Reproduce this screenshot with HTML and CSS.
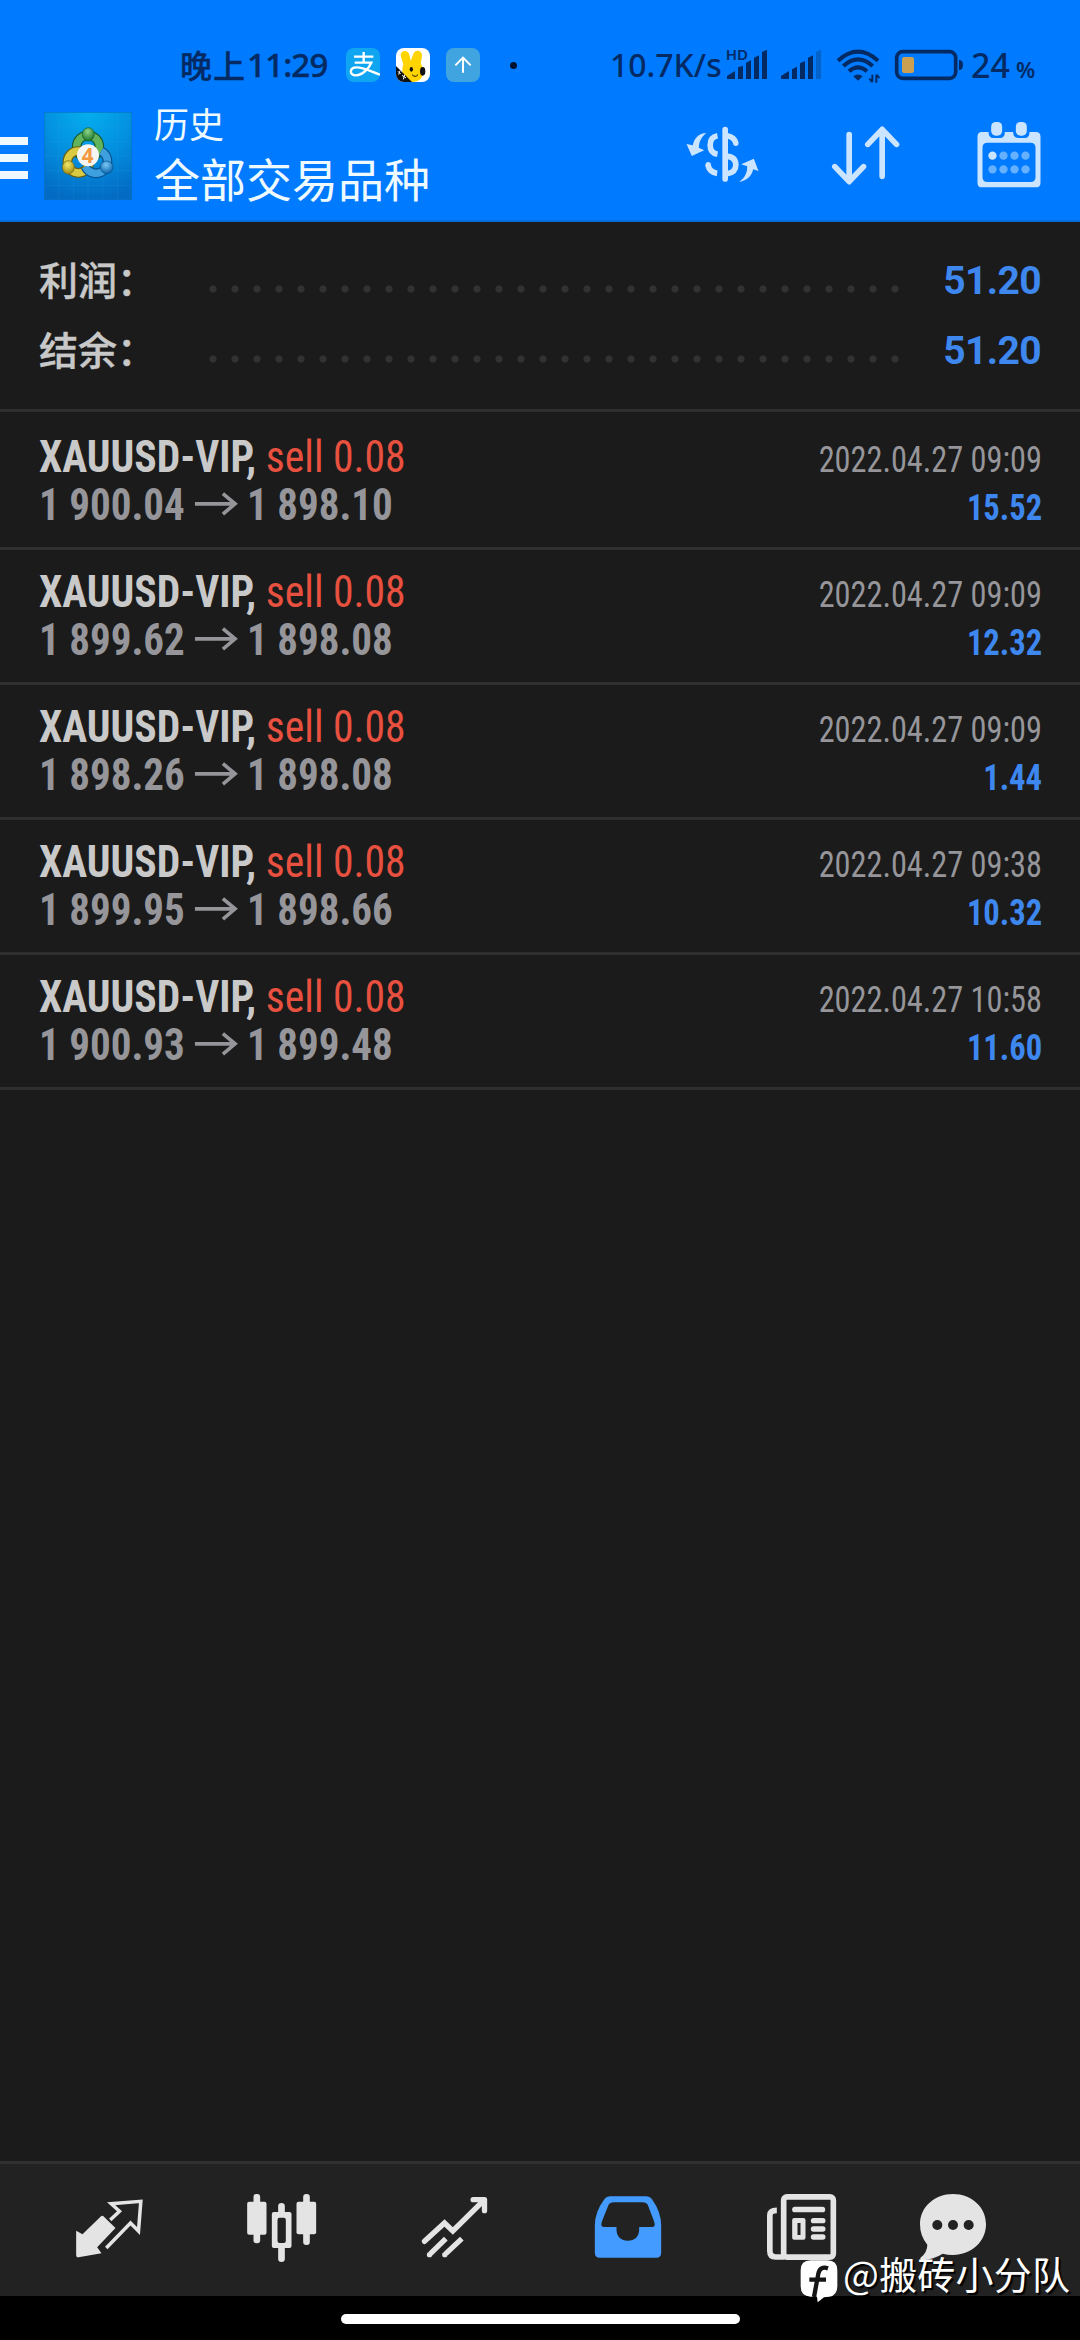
FILE: index.html
```html
<!DOCTYPE html>
<html lang="zh-CN">
<head>
<meta charset="utf-8">
<title>历史</title>
<link rel="stylesheet" href="styles.css">
</head>
<body>
<div class="screen">
  <header class="top">
    <div class="status">
      <span class="clock"><span class="clock-cn">晚上</span><span class="clock-num">11:29</span></span>
      <svg class="badge" viewBox="558 54 102 102"><rect x="558" y="54" width="102" height="102" rx="24" fill="#10a5f0"/><path d="M582 80H640M611 66V98M584 98H634C626 116 606 136 588 136C566 136 568 112 590 112C614 112 634 126 660 134" fill="none" stroke="#fff" stroke-width="7"/></svg>
      <svg class="badge" viewBox="708 54 102 102"><defs><clipPath id="rb"><rect x="708" y="54" width="102" height="102" rx="24"/></clipPath></defs><g clip-path="url(#rb)"><rect x="708" y="54" width="102" height="102" fill="#fff"/><path d="M722 76C722 60 744 58 748 74L752 92L760 72C766 56 788 62 786 78L782 102C794 112 796 156 758 156C730 156 722 120 730 104Z" fill="#ffd400"/><ellipse cx="788" cy="124" rx="8" ry="13" fill="#111"/><ellipse cx="754" cy="118" rx="5" ry="7" fill="#111"/><path d="M756 134Q766 144 774 134" fill="none" stroke="#111" stroke-width="3"/><path d="M708 108L756 156H708Z" fill="#111"/><path d="M714 124L722 132M720 122L716 134M726 136L738 144M734 134L730 148" stroke="#fff" stroke-width="3"/></g></svg>
      <svg class="badge" viewBox="858 54 102 102"><rect x="858" y="54" width="102" height="102" rx="24" fill="#40a4e0"/><path d="M909 128V84M886 106L909 83L932 106" fill="none" stroke="#fff" stroke-width="6"/></svg>
      <i class="dot"></i>
      <span class="speed">10.7K/s</span>
      <svg class="signals" viewBox="405 45 720 120">
        <text x="407" y="91" class="hd" textLength="67" lengthAdjust="spacingAndGlyphs">HD</text>
        <g fill="#032a63"><path d="M411 147V138L435 123V147ZM444 147V112L459 107V147ZM468 147V98L483 91V147ZM492 147V83L507 76V147ZM516 147V66L531 59V147Z"/><path d="M573 147V138L597 123V147ZM606 147V118L621 110V147ZM630 147V100L645 93V147ZM654 147V83L669 76V147Z"/></g>
        <path d="M678 147V66L693 59V147Z" fill="#0562c9"/>
        <g fill="none" stroke="#032a63" stroke-width="12"><path d="M744 92Q804 38 864 92M760 108Q804 68 848 108M777 124Q804 100 831 124"/></g>
        <path d="M790 139Q804 128 818 139L804 152Z" fill="#032a63"/>
        <path d="M847 157V134M838 146L847 156M859 158V134M868 144L859 134" stroke="#032a63" stroke-width="6" fill="none"/>
        <rect x="920" y="65" width="177" height="80" rx="18" fill="none" stroke="#032a63" stroke-width="11"/>
        <rect x="936" y="81" width="36" height="48" rx="6" fill="#cba052"/>
        <path d="M1107 90Q1119 90 1119 105Q1119 120 1107 120Z" fill="#032a63"/>
      </svg>
      <span class="battery">24</span><span class="percent">%</span>
    </div>
    <div class="appbar">
      <div class="menu"><i></i><i></i><i></i></div>
      <svg class="logo" viewBox="0 0 264 264">
        <defs>
          <radialGradient id="bg" cx=".5" cy="0" r="1"><stop offset="0" stop-color="#04aef0"/><stop offset=".5" stop-color="#0390df"/><stop offset="1" stop-color="#036bc4"/></radialGradient>
          <radialGradient id="gr" cx=".45" cy=".3" r=".7"><stop offset="0" stop-color="#8fd68a"/><stop offset="1" stop-color="#18742a"/></radialGradient>
          <radialGradient id="ye" cx=".45" cy=".3" r=".7"><stop offset="0" stop-color="#f4ea6a"/><stop offset="1" stop-color="#a08a10"/></radialGradient>
          <radialGradient id="bl" cx=".45" cy=".3" r=".7"><stop offset="0" stop-color="#7ac8f6"/><stop offset="1" stop-color="#0a63ac"/></radialGradient>
        </defs>
        <rect width="264" height="264" fill="url(#bg)"/>
        <path d="M44 0V264M88 0V264M132 0V264M176 0V264M220 0V264M0 44H264M0 88H264M0 132H264M0 176H264M0 220H264" stroke="#2fa9ec" stroke-opacity=".25" stroke-width="2"/>
        <g fill="none">
          <circle cx="132" cy="104" r="34" stroke="#15592b" stroke-width="29"/><circle cx="132" cy="104" r="34" stroke="#62b45c" stroke-width="22"/>
          <circle cx="103" cy="150" r="33" stroke="#675f14" stroke-width="29"/><circle cx="103" cy="150" r="33" stroke="#d9ca42" stroke-width="22"/>
          <path d="M124 164A35 35 0 1 0 172 118" stroke="#07508d" stroke-width="29"/><path d="M124 164A35 35 0 1 0 172 118" stroke="#3fa0e0" stroke-width="22"/>
        </g>
        <ellipse cx="133" cy="67" rx="18" ry="20" fill="url(#gr)" stroke="#14602a" stroke-width="2"/>
        <ellipse cx="73" cy="166" rx="18" ry="20" fill="url(#ye)" stroke="#766812" stroke-width="2"/>
        <ellipse cx="188" cy="166" rx="19" ry="19" fill="url(#bl)" stroke="#07508d" stroke-width="2"/>
        <circle cx="132" cy="130" r="33" fill="#f5f5f3"/>
        <text x="131" y="153" text-anchor="middle" class="four">4</text>
        <rect x="1" y="1" width="262" height="262" fill="none" stroke="#0673c4" stroke-width="2"/>
      </svg>
      <div class="titles"><div class="sub">历史</div><div class="title">全部交易品种</div></div>
      <div class="actions">
        <svg viewBox="64.500 60 240 240">
          <g fill="none" stroke="#cbe4ff" stroke-width="17"><path d="M194 104V252" stroke-linecap="round"/><path d="M171 122Q149 126 149 150Q149 174 171 178M142 209Q147 232 170 235" /><path d="M200 122Q222 126 226 144M200 184Q226 186 226 210Q226 232 200 236" /></g>
          <circle cx="143" cy="209" r="8" fill="#cbe4ff"/><circle cx="226" cy="145" r="8" fill="#cbe4ff"/>
          <path d="M137 114C116 114 101 129 97 151L78 147L94 183L131 166L115 158C116 140 122 127 137 114ZM236 261C256 247 261 228 260 214L242 208L280 191L294 228L278 223C274 243 260 257 236 261Z" fill="#cbe4ff"/>
        </svg>
        <svg viewBox="496.500 60 240 240"><g fill="none" stroke="#cbe4ff" stroke-width="17" stroke-linecap="round" stroke-linejoin="round"><path d="M566 119V259M523 215L566 260L609 215"/><path d="M665 244V105M622 148L665 103L708 148"/></g></svg>
        <svg viewBox="928.500 60 240 240">
          <path fill-rule="evenodd" d="M964 111H984Q984 129 1000 129H1018Q1033 129 1033 111H1058Q1058 129 1074 129H1092Q1107 129 1107 111H1126Q1140 111 1140 125V263Q1140 277 1126 277H964Q951 277 951 263V125Q951 111 964 111ZM981 143Q966 143 966 158V246Q966 261 981 261H1110Q1125 261 1125 246V158Q1125 143 1110 143Z" fill="#cbe4ff"/>
          <rect x="992" y="81" width="33" height="41" rx="14" fill="#cbe4ff"/><rect x="1066" y="81" width="33" height="41" rx="14" fill="#cbe4ff"/>
          <circle cx="996" cy="182" r="12.500" fill="#cbe4ff"/>
          <g fill="#65b0ff"><circle cx="1029" cy="182" r="12.500"/><circle cx="1062" cy="182" r="12.500"/><circle cx="1095" cy="182" r="12.500"/><circle cx="996" cy="223" r="12.500"/><circle cx="1029" cy="223" r="12.500"/><circle cx="1062" cy="223" r="12.500"/><circle cx="1095" cy="223" r="12.500"/></g>
        </svg>
      </div>
    </div>
  </header>

  <section class="summary">
    <div class="sum-row"><span class="label">利润：</span><i class="leader"></i><span class="total">51.20</span></div>
    <div class="sum-row"><span class="label">结余：</span><i class="leader"></i><span class="total">51.20</span></div>
  </section>

  <main class="deals">
    <div class="deal">
      <div class="line"><span class="name"><b>XAUUSD-VIP,</b> <span class="sell">sell 0.08</span></span><span class="date">2022.04.27 09:09</span></div>
      <div class="line"><span class="prices"><span class="num">1 900.04</span><svg class="arrow" viewBox="585 750 132 76"><path d="M587 789H709M672 758L709 789L672 820" /></svg><span class="num">1 898.10</span></span><span class="profit">15.52</span></div>
    </div>
    <div class="deal">
      <div class="line"><span class="name"><b>XAUUSD-VIP,</b> <span class="sell">sell 0.08</span></span><span class="date">2022.04.27 09:09</span></div>
      <div class="line"><span class="prices"><span class="num">1 899.62</span><svg class="arrow" viewBox="585 750 132 76"><path d="M587 789H709M672 758L709 789L672 820" /></svg><span class="num">1 898.08</span></span><span class="profit">12.32</span></div>
    </div>
    <div class="deal">
      <div class="line"><span class="name"><b>XAUUSD-VIP,</b> <span class="sell">sell 0.08</span></span><span class="date">2022.04.27 09:09</span></div>
      <div class="line"><span class="prices"><span class="num">1 898.26</span><svg class="arrow" viewBox="585 750 132 76"><path d="M587 789H709M672 758L709 789L672 820" /></svg><span class="num">1 898.08</span></span><span class="profit">1.44</span></div>
    </div>
    <div class="deal">
      <div class="line"><span class="name"><b>XAUUSD-VIP,</b> <span class="sell">sell 0.08</span></span><span class="date">2022.04.27 09:38</span></div>
      <div class="line"><span class="prices"><span class="num">1 899.95</span><svg class="arrow" viewBox="585 750 132 76"><path d="M587 789H709M672 758L709 789L672 820" /></svg><span class="num">1 898.66</span></span><span class="profit">10.32</span></div>
    </div>
    <div class="deal">
      <div class="line"><span class="name"><b>XAUUSD-VIP,</b> <span class="sell">sell 0.08</span></span><span class="date">2022.04.27 10:58</span></div>
      <div class="line"><span class="prices"><span class="num">1 900.93</span><svg class="arrow" viewBox="585 750 132 76"><path d="M587 789H709M672 758L709 789L672 820" /></svg><span class="num">1 899.48</span></span><span class="profit">11.60</span></div>
    </div>
  </main>

  <nav class="tabs">
    <div class="tab"><svg viewBox="217.500 162 216 216"><path d="M308 228L345 264L290 322L303 340L234 352Q227 353 227 346V272L246 283L300 230Q304 226 308 228Z" fill="#e4e4e4"/><path d="M333 236L357 214L332 191L421 184L414 273L390 249L321 320" fill="none" stroke="#e4e4e4" stroke-width="10.500" stroke-linecap="square"/></svg></div>
    <div class="tab"><svg viewBox="736.500 162 216 216"><g fill="#e4e4e4"><rect x="740" y="185" width="58" height="99" rx="6"/><rect x="759" y="162" width="20" height="148" rx="9"/><rect x="888" y="185" width="59" height="98" rx="6"/><rect x="908" y="162" width="20" height="153" rx="9"/><path fill-rule="evenodd" d="M820 216H867Q873 216 873 222V318Q873 324 867 324H820Q814 324 814 318V222Q814 216 820 216ZM837 233Q831 233 831 240V302Q831 309 837 309H850Q856 309 856 302V240Q856 233 850 233Z"/><path d="M833 218V198Q833 189 843 189Q853 189 853 198V218ZM833 322V357Q833 366 843 366Q853 366 853 357V322Z"/></g></svg></div>
    <div class="tab"><svg viewBox="175.500 162 216 216"><g fill="none" stroke="#e4e4e4" stroke-width="16"><path d="M192 304L252 249L277 273L368 183" stroke-linecap="round"/><path d="M338 179H372V212" stroke-linecap="round" stroke-linejoin="round"/><path d="M256 296L210 341M304 296L256 341"/></g><path d="M350 175H378V206Z" fill="#e4e4e4"/><circle cx="207" cy="344" r="8" fill="#e4e4e4"/><circle cx="253" cy="344" r="8" fill="#e4e4e4"/></svg></div>
    <div class="tab"><svg viewBox="694.500 162 216 216"><path fill-rule="evenodd" d="M748 169H858Q868 169 874 177Q902 216 902 256V338Q902 353 887 353H718Q703 353 703 338V256Q703 216 732 177Q738 169 748 169ZM760 187Q748 187 744 195L725 242Q718 261 731 261H768V268Q768 284 777 293Q787 302 802 302Q817 302 827 293Q836 284 836 268V261H875Q887 261 880 242L862 195Q858 187 846 187Z" fill="#439bff"/></svg></div>
    <div class="tab"><svg viewBox="133.500 162 216 216"><g fill="none" stroke="#e4e4e4" stroke-width="17"><rect x="189.500" y="170.500" width="149" height="181" rx="10"/><path d="M169 211Q148 211 148 226V333Q148 351 166 351H192"/></g><g fill="#e4e4e4"><rect x="215" y="200" width="99" height="17" rx="8"/><rect x="271" y="234" width="44" height="16" rx="8"/><rect x="271" y="259" width="44" height="16" rx="8"/><rect x="271" y="283" width="44" height="16" rx="8"/><path fill-rule="evenodd" d="M221 234H249Q255 234 255 240V293Q255 299 249 299H221Q215 299 215 293V240Q215 234 221 234ZM231 249V285H240V249Z"/></g></svg></div>
    <div class="tab tab-last"><svg viewBox="591 162 216 216"><path d="M699 162C754 162 798 201 798 253S754 345 699 345Q682 345 668 341Q641 359 606 360Q597 359 603 352Q622 336 622 314Q600 289 600 253C600 201 644 162 699 162Z" fill="#e4e4e4"/><g fill="#222"><circle cx="652" cy="255" r="15"/><circle cx="699" cy="255" r="15"/><circle cx="746" cy="255" r="15"/></g></svg></div>
  </nav>
  <footer class="home"><i class="pill"></i></footer>

  <div class="watermark">
    <svg viewBox="240 358 120 132"><path d="M272 362H322Q352 362 352 392V440Q352 468 328 471L312 473L293 488L291 471H272Q242 470 242 440V392Q242 362 272 362Z" fill="#fff"/><path d="M324 386Q300 378 295 402L282 472M268 420H318" fill="none" stroke="#151515" stroke-width="13"/></svg>
    <span>@搬砖小分队</span>
  </div>
</div>
</body>
</html>
```
FILE: styles.css
```css
* { box-sizing: border-box; }
body { margin: 0; background: #1b1b1b; font-family: "Roboto Condensed", Roboto, "Noto Sans CJK SC", sans-serif; }
svg { display: block; flex: none; }
.screen { position: relative; width: 1080px; height: 2340px; display: flex; flex-direction: column; overflow: hidden; background: #1b1b1b; }

.top { height: 222px; background: #007aff; border-bottom: 2px solid #096dd9; flex: none; }
.status { display: flex; align-items: center; height: 95px; padding: 35px 0 0 180px; color: #032a63; white-space: nowrap; }
.clock { display: flex; align-items: center; width: 166px; line-height: 40px; }
.clock-cn { font: 500 32px/40px "Noto Sans CJK SC", sans-serif; letter-spacing: 1px; width: 67px; margin-top: -3px; -webkit-text-stroke: .3px #032a63; }
.clock-num { font: 500 33px/40px "Noto Sans", sans-serif; letter-spacing: -.8px; -webkit-text-stroke: .4px #032a63; }
.badge { width: 34px; height: 34px; margin-right: 16px; }
.dot { width: 7px; height: 7px; border-radius: 50%; background: #00132e; margin: 0 93px 0 14px; flex: none; }
.speed { width: 115px; flex: none; font: 500 32px/40px "Noto Sans", sans-serif; }
.signals { width: 240px; height: 40px; overflow: visible; }
.hd { font: 600 45px "Noto Sans", sans-serif; fill: #032a63; }
.battery { font: 500 34px/40px "Noto Sans", sans-serif; margin-left: 6px; width: 45px; }
.percent { font: 600 22px/40px "Noto Sans", sans-serif; padding-top: 7px; }

.appbar { display: flex; align-items: flex-start; height: 125px; }
.menu { display: flex; flex-direction: column; gap: 9px; width: 44px; padding-top: 42px; }
.menu i { width: 28px; height: 8px; background: #edf8ff; }
.logo { width: 88px; height: 88px; margin-top: 17px; }
.four { font: 700 62px "Open Sans", sans-serif; fill: #f3993f; }
.titles { margin-left: 22px; padding-top: 9px; font-family: "Noto Sans CJK SC", sans-serif; color: #effaff; white-space: nowrap; }
.sub { font-size: 35px; line-height: 38px; }
.title { font-size: 46px; line-height: 70px; }
.actions { display: flex; gap: 64px; margin: 20px 30.500px 0 auto; }
.actions svg { width: 80px; height: 80px; }

.summary { height: 190px; padding-top: 24px; border-bottom: 3px solid #2f2f2f; flex: none; }
.sum-row { display: flex; align-items: center; height: 70px; padding: 0 39px; }
.label { width: 163px; margin-top: -6px; color: #c8c8c8; font: 500 39px/70px "Noto Sans CJK SC", sans-serif; -webkit-text-stroke: .4px #c8c8c8; }
.leader { width: 704px; height: 22px; margin-top: 15px; background: radial-gradient(circle, #313131 3.200px, transparent 4px) 0 0 / 22px 22px; }
.total { margin-left: auto; color: #3e87ee; font: 700 39px/70px Roboto, sans-serif; letter-spacing: -.6px; }

.deals { flex: 1; padding-top: 3px; }
.deal { height: 135px; padding: 18px 38px 0 39px; border-bottom: 3px solid #2f2f2f; }
.line { display: flex; justify-content: space-between; align-items: baseline; height: 48px; line-height: 48px; white-space: nowrap; font-stretch: 75%; }
.name { font-size: 45px; color: #c9c9c9; transform: scaleX(.925); transform-origin: left; }
.sell { color: #e8503f; }
.prices { display: flex; align-items: baseline; font-size: 45px; font-weight: 700; color: #95959a; }
.num { transform: scaleX(.912); transform-origin: left; margin-right: -14.500px; }
.arrow { width: 44px; height: 25px; align-self: center; margin: 0 9px 3px 10px; }
.arrow path { fill: none; stroke: #95959a; stroke-width: 11; }
.date { font-size: 36px; color: #95959a; transform: scaleX(.897); transform-origin: right; }
.profit { font-size: 36px; font-weight: 700; color: #3e87ee; transform: scaleX(.905); transform-origin: right; }

.tabs { display: flex; height: 135px; padding-left: 22px; background: #222; border-top: 3px solid #303030; flex: none; }
.tab { width: 173px; display: flex; align-items: center; justify-content: center; flex: none; }
.tab-last { width: 132px; }
.tab svg { width: 72px; height: 72px; }
.home { height: 44px; background: #000; display: flex; justify-content: center; padding-top: 18px; flex: none; }
.pill { width: 399px; height: 10px; border-radius: 5px; background: #fff; }
.watermark { position: absolute; left: 800px; top: 2247px; display: flex; align-items: center; gap: 3px; color: #fff; font: 400 38px/52px "Noto Sans CJK SC", sans-serif; white-space: nowrap; text-shadow: 2px 2px 1px #000; }
.watermark svg { width: 40px; height: 44px; margin-top: 12px; }
.watermark span { margin-bottom: 4px; letter-spacing: .2px; }
```
